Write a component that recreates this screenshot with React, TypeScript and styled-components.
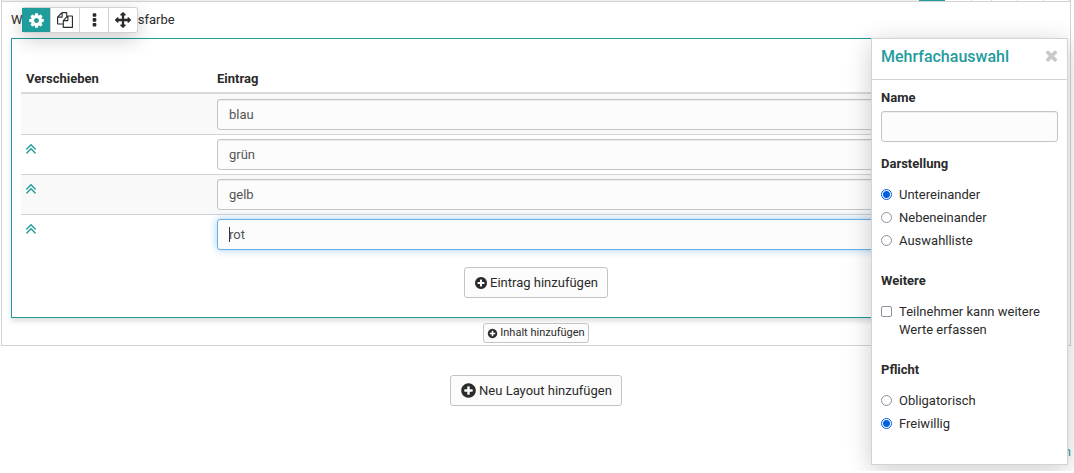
import React, { useEffect, useRef } from "react";
import styled, { createGlobalStyle, css } from "styled-components";

const teal = "#1f9c9c";
const ink = "#2b2b2b";
const line = "#d3d3d3";
const control = "#c4c4c4";

const GlobalStyle = createGlobalStyle`
  *, *::before, *::after { box-sizing: border-box; }
  body {
    margin: 0;
    background: #fff;
    color: ${ink};
    font: 13px/18px Roboto, "Liberation Sans", sans-serif;
  }
  button, input { font: inherit; color: inherit; }
`;

const paths = {
  cog: "M1152 896q0-106-75-181t-181-75-181 75-75 181 75 181 181 75 181-75 75-181zm512-109v222q0 12-8 23t-20 13l-185 28q-19 54-39 91 35 50 107 138 10 12 10 25t-9 23q-27 37-99 108t-94 71q-12 0-26-9l-138-108q-44 23-91 38-16 136-29 186-7 28-36 28h-222q-14 0-24.5-8.5t-11.5-21.5l-28-184q-49-16-90-37l-141 107q-10 9-25 9-14 0-25-11-126-114-165-168-7-10-7-23 0-12 8-23 15-21 51-66.5t54-70.5q-27-50-41-99l-183-27q-13-2-21-12.5t-8-23.5v-222q0-12 8-23t19-13l186-28q14-46 39-92-40-57-107-138-10-12-10-24 0-10 9-23 26-36 98.5-107.5t94.5-71.5q13 0 26 10l138 107q44-23 91-38 16-136 29-186 7-28 36-28h222q14 0 24.5 8.5t11.5 21.5l28 184q49 16 90 37l142-107q9-9 24-9 13 0 25 10 129 119 165 170 7 8 7 22 0 12-8 23-15 21-51 66.5t-54 70.5q26 50 41 98l183 28q13 2 21 12.5t8 23.5z",
  copy: "M1696 384q40 0 68 28t28 68v1216q0 40-28 68t-68 28h-960q-40 0-68-28t-28-68v-288h-544q-40 0-68-28t-28-68v-672q0-40 20-88t48-76l408-408q28-28 76-48t88-20h416q40 0 68 28t28 68v328q68-40 128-40h416zm-544 213l-299 299h299v-299zm-640-384l-299 299h299v-299zm196 647l316-316v-416h-384v416q0 40-28 68t-68 28h-416v640h512v-256q0-40 20-88t48-76zm956 804v-1152h-384v416q0 40-28 68t-68 28h-416v640h896z",
  more: "M1088 1248v192q0 40-28 68t-68 28h-192q-40 0-68-28t-28-68v-192q0-40 28-68t68-28h192q40 0 68 28t28 68zm0-512v192q0 40-28 68t-68 28h-192q-40 0-68-28t-28-68v-192q0-40 28-68t68-28h192q40 0 68 28t28 68zm0-512v192q0 40-28 68t-68 28h-192q-40 0-68-28t-28-68v-192q0-40 28-68t68-28h192q40 0 68 28t28 68z",
  move: "M1792 896q0 26-19 45l-256 256q-19 19-45 19t-45-19-19-45v-128h-384v384h128q26 0 45 19t19 45-19 45l-256 256q-19 19-45 19t-45-19l-256-256q-19-19-19-45t19-45 45-19h128v-384h-384v128q0 26-19 45t-45 19-45-19l-256-256q-19-19-19-45t19-45l256-256q19-19 45-19t45 19 19 45v128h384v-384h-128q-26 0-45-19t-19-45 19-45l256-256q19-19 45-19t45 19l256 256q19 19 19 45t-19 45-45 19h-128v384h384v-128q0-26 19-45t45-19 45 19l256 256q19 19 19 45z",
  up: "M1395 1184q0 13-10 23l-50 50q-10 10-23 10t-23-10l-393-393-393 393q-10 10-23 10t-23-10l-50-50q-10-10-10-23t10-23l466-466q10-10 23-10t23 10l466 466q10 10 10 23zm0-384q0 13-10 23l-50 50q-10 10-23 10t-23-10l-393-393-393 393q-10 10-23 10t-23-10l-50-50q-10-10-10-23t10-23l466-466q10-10 23-10t23 10l466 466q10 10 10 23z",
  plus: "M1344 960v-128q0-26-19-45t-45-19h-256v-256q0-26-19-45t-45-19h-128q-26 0-45 19t-19 45v256h-256q-26 0-45 19t-19 45v128q0 26 19 45t45 19h256v256q0 26 19 45t45 19h128q26 0 45-19t19-45v-256h256q26 0 45-19t19-45zm320-64q0 209-103 385.5t-279.5 279.5-385.5 103-385.5-103-279.5-279.5-103-385.5 103-385.5 279.5-279.5 385.5-103 385.5 103 279.5 279.5 103 385.5z",
  close: "M1490 1322q0 40-28 68l-136 136q-28 28-68 28t-68-28l-294-294-294 294q-28 28-68 28t-68-28l-136-136q-28-28-28-68t28-68l294-294-294-294q-28-28-28-68t28-68l136-136q28-28 68-28t68 28l294 294 294-294q28-28 68-28t68 28l136 136q28 28 28 68t-28 68l-294 294 294 294q28 28 28 68z",
};

const Svg = styled.svg`
  display: block;
  flex: none;
  fill: currentColor;
`;

function Icon({ name, size }: { name: keyof typeof paths; size: number }) {
  return (
    <Svg width={size} height={size} viewBox="0 0 1792 1792" aria-hidden="true">
      <path d={paths[name]} />
    </Svg>
  );
}

const Page = styled.div`
  position: relative;
  padding: 0 3px 10px 1px;
`;

const Section = styled.section`
  border: 1px solid ${line};
  border-top: 0;
`;

const TabStrip = styled.div`
  display: flex;
  justify-content: flex-end;
  height: 2px;
  background: #eee;
  border-bottom: 1px solid ${line};
`;

const Tab = styled.span<{ $width: number; $active?: boolean }>`
  width: ${(p) => p.$width}px;
  background: ${(p) => (p.$active ? teal : "#fff")};
  border-right: ${(p) => (p.$active ? "0" : `1px solid ${line}`)};
`;

const SectionBody = styled.div`
  padding: 9px 9px 2px;
`;

const Question = styled.p`
  margin: 0 0 9px;
`;

const Editor = styled.div`
  margin-bottom: 5px;
  padding: 26px 9px 19px;
  border: 1px solid ${teal};
  box-shadow: 0 3px 5px rgba(0, 0, 0, 0.14);
`;

const Toolbar = styled.div`
  position: absolute;
  top: 7px;
  left: 22px;
  display: flex;
  background: #fff;
  border: 1px solid ${line};
  border-left: 0;
  border-radius: 3px;
  box-shadow: 0 6px 20px rgba(0, 0, 0, 0.2);
`;

const ToolButton = styled.button<{ $active?: boolean }>`
  display: flex;
  align-items: center;
  justify-content: center;
  width: 28px;
  height: 24px;
  padding: 0;
  border: 0;
  background: ${(p) => (p.$active ? teal : "transparent")};
  color: ${(p) => (p.$active ? "#fff" : ink)};
  & + & {
    width: 29px;
    border-left: 1px solid ${line};
  }
`;

const Table = styled.table`
  width: 100%;
  table-layout: fixed;
  border-spacing: 0;
`;

const HeadCell = styled.th<{ $narrow?: boolean }>`
  ${(p) => p.$narrow && css`width: 191px;`}
  padding: 5px 5px 4px;
  border-bottom: 2px solid #d9d9d9;
  text-align: left;
  font-weight: 700;
`;

const Cell = styled.td`
  height: 40px;
  padding: 4px 5px;
  vertical-align: top;
`;

const Row = styled.tr`
  &:nth-child(odd) { background: #f9f9f9; }
  &:first-child ${Cell} { padding-top: 5px; }
  & + & ${Cell} { border-top: 1px solid ${line}; }
`;

const MoveButton = styled.button`
  display: block;
  margin: 2px 0 0;
  padding: 0;
  border: 0;
  background: none;
  color: ${teal};
  svg { margin-left: -4px; }
`;

const TextInput = styled.input`
  display: block;
  width: 100%;
  height: 31px;
  padding: 0 11px;
  border: 1px solid ${control};
  border-radius: 3px;
  background: #fcfcfc;
  color: #555;
  box-shadow: inset 0 1px 1px rgba(0, 0, 0, 0.06);
  outline: 0;
  &:focus {
    border-color: #66afe9;
    box-shadow: 0 0 8px rgba(102, 175, 233, 0.6);
    caret-color: transparent;
    background: linear-gradient(#333, #333) 11px center / 1px 15px no-repeat #fcfcfc;
  }
`;

const Center = styled.div<{ $top?: number }>`
  display: flex;
  justify-content: center;
  padding-top: ${(p) => p.$top || 0}px;
`;

const AddButton = styled.button<{ $small?: boolean }>`
  display: flex;
  align-items: center;
  gap: 2px;
  height: ${(p) => (p.$small ? 20 : 31)}px;
  padding: 0 ${(p) => (p.$small ? 3 : 9)}px;
  border: 1px solid ${control};
  border-radius: 3px;
  background: #fcfcfc;
  font-size: ${(p) => (p.$small ? 11 : 13)}px;
`;

const Footer = styled.footer`
  display: flex;
  justify-content: flex-end;
  padding-top: 37px;
`;

const FooterLink = styled.a`
  color: ${teal};
  text-decoration: none;
`;

const Panel = styled.aside`
  position: absolute;
  top: 38px;
  right: 6px;
  width: 197px;
  background: #fff;
  border: 1px solid ${line};
  box-shadow: 0 5px 24px rgba(0, 0, 0, 0.2);
`;

const PanelHeader = styled.header`
  display: flex;
  justify-content: space-between;
  align-items: flex-start;
  padding: 8px 7px 12px 9px;
  border-bottom: 1px solid ${line};
`;

const PanelTitle = styled.h2`
  margin: 0;
  color: ${teal};
  font-size: 16px;
  line-height: 20px;
  font-weight: 500;
`;

const CloseButton = styled.button`
  padding: 0;
  border: 0;
  background: none;
  color: #c8c8c8;
`;

const Form = styled.form`
  padding: 9px 9px 31px;
`;

const Field = styled.div`
  margin-bottom: 13px;
`;

const FieldLabel = styled.label`
  display: block;
  margin-bottom: 4px;
  font-weight: 700;
`;

const Group = styled.fieldset`
  margin: 0;
  padding: 0;
  border: 0;
  & + & { margin-top: 22px; }
`;

const Legend = styled.legend`
  padding: 0 0 13px;
  font-weight: 700;
`;

const Choices = styled.div`
  display: grid;
  gap: 5px;
`;

const Choice = styled.label`
  display: flex;
  align-items: flex-start;
  gap: 7px;
`;

const Mark = styled.input`
  appearance: none;
  flex: none;
  width: 11px;
  height: 11px;
  margin: 3px 0 0;
  border: 1px solid #8f8f9d;
  background: #fff;
  border-radius: ${(p) => (p.type === "radio" ? "50%" : "2px")};
  &:checked {
    border-color: #0060df;
    background: radial-gradient(circle, #0060df 3px, #fff 4px);
  }
`;

const tools = [
  { name: "cog", label: "Bearbeiten", size: 17 },
  { name: "copy", label: "Duplizieren", size: 16 },
  { name: "more", label: "Weitere Aktionen", size: 17 },
  { name: "move", label: "Verschieben", size: 16 },
] as const;

const entries = ["blau", "grün", "gelb", "rot"];

export default function App() {
  const active = useRef<HTMLInputElement>(null);

  useEffect(() => {
    active.current?.focus();
    active.current?.setSelectionRange(0, 0);
  }, []);

  return (
    <>
      <GlobalStyle />
      <Page>
        <Section>
          <TabStrip>
            <Tab $width={26} $active />
            <Tab $width={27} />
            <Tab $width={20} />
            <Tab $width={26} />
            <Tab $width={26} />
            <Tab $width={26} />
          </TabStrip>
          <SectionBody>
            <Question>Was ist Deine Lieblingsfarbe</Question>
            <Editor>
              <Table>
                <thead>
                  <tr>
                    <HeadCell $narrow>Verschieben</HeadCell>
                    <HeadCell>Eintrag</HeadCell>
                  </tr>
                </thead>
                <tbody>
                  {entries.map((entry, i) => (
                    <Row key={entry}>
                      <Cell>
                        {i > 0 && (
                          <MoveButton type="button" aria-label={`${entry} nach oben`}>
                            <Icon name="up" size={18} />
                          </MoveButton>
                        )}
                      </Cell>
                      <Cell>
                        <TextInput
                          ref={i === entries.length - 1 ? active : undefined}
                          aria-label={`Eintrag ${i + 1}`}
                          defaultValue={entry}
                        />
                      </Cell>
                    </Row>
                  ))}
                </tbody>
              </Table>
              <Center $top={13}>
                <AddButton type="button">
                  <Icon name="plus" size={14} />
                  Eintrag hinzufügen
                </AddButton>
              </Center>
            </Editor>
            <Center>
              <AddButton type="button" $small>
                <Icon name="plus" size={11} />
                Inhalt hinzufügen
              </AddButton>
            </Center>
          </SectionBody>
        </Section>
        <Center $top={29}>
          <AddButton type="button">
            <Icon name="plus" size={17} />
            Neu Layout hinzufügen
          </AddButton>
        </Center>
        <Footer>
          <FooterLink href="#top">Nach oben</FooterLink>
        </Footer>

        <Toolbar>
          {tools.map((tool, i) => (
            <ToolButton key={tool.name} type="button" aria-label={tool.label} $active={i === 0}>
              <Icon name={tool.name} size={tool.size} />
            </ToolButton>
          ))}
        </Toolbar>

        <Panel>
          <PanelHeader>
            <PanelTitle>Mehrfachauswahl</PanelTitle>
            <CloseButton type="button" aria-label="Schliessen">
              <Icon name="close" size={17} />
            </CloseButton>
          </PanelHeader>
          <Form>
            <Field>
              <FieldLabel htmlFor="name">Name</FieldLabel>
              <TextInput id="name" />
            </Field>
            <Group>
              <Legend>Darstellung</Legend>
              <Choices>
                <Choice><Mark type="radio" name="layout" defaultChecked />Untereinander</Choice>
                <Choice><Mark type="radio" name="layout" />Nebeneinander</Choice>
                <Choice><Mark type="radio" name="layout" />Auswahlliste</Choice>
              </Choices>
            </Group>
            <Group>
              <Legend>Weitere</Legend>
              <Choice><Mark type="checkbox" />Teilnehmer kann weitere Werte erfassen</Choice>
            </Group>
            <Group>
              <Legend>Pflicht</Legend>
              <Choices>
                <Choice><Mark type="radio" name="required" />Obligatorisch</Choice>
                <Choice><Mark type="radio" name="required" defaultChecked />Freiwillig</Choice>
              </Choices>
            </Group>
          </Form>
        </Panel>
      </Page>
    </>
  );
}
